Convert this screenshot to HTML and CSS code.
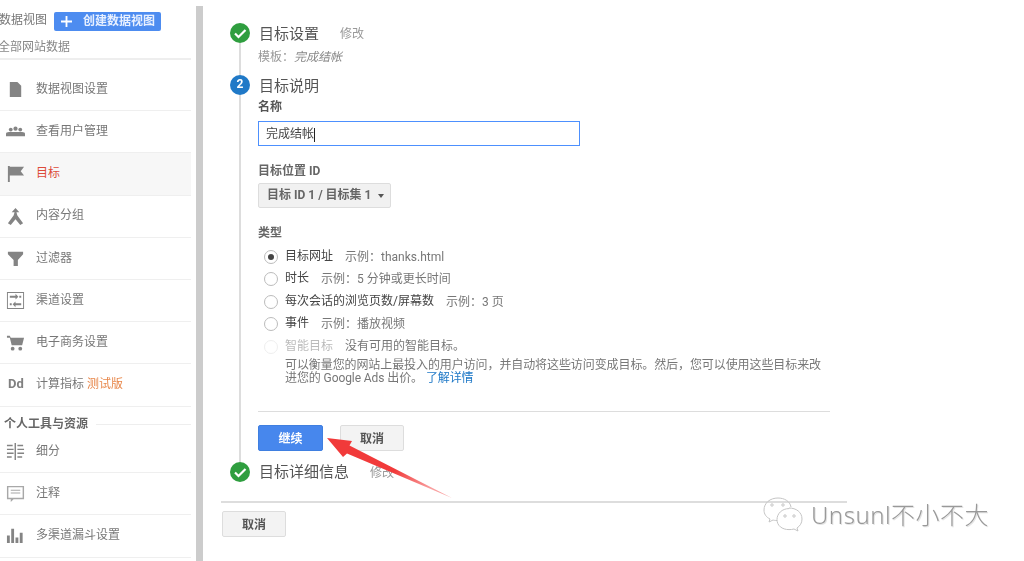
FILE: index.html
```html
<!DOCTYPE html>
<html lang="zh-CN">
<head>
<meta charset="utf-8">
<title>目标说明</title>
<link rel="stylesheet" href="styles.css">
</head>
<body>
<div class="app">
  <aside class="sidebar">
    <div class="view-head">
      <span class="view-title">数据视图</span>
      <button class="create-btn"><svg class="plus" viewBox="0 0 12 12"><path d="M5 0h2v5h5v2H7v5H5V7H0V5h5z"/></svg><span>创建数据视图</span></button>
    </div>
    <div class="view-sub">全部网站数据</div>
    <nav class="menu">
      <a class="row"><svg class="ico" viewBox="0 0 20 20"><path d="M4 2h8l4 4v12H4z"/></svg><span>数据视图设置</span></a>
      <a class="row"><svg class="ico" viewBox="0 0 20 20"><circle cx="5" cy="8" r="2"/><circle cx="10" cy="7" r="2.2"/><circle cx="15" cy="8" r="2"/><path d="M0 15v-2.500q0-2 3-2h14q3 0 3 2V15z"/></svg><span>查看用户管理</span></a>
      <a class="row active"><svg class="ico" viewBox="0 0 20 20"><path d="M2 2h2v17H2zM4 3h15l-3.500 4.500L19 12H4z"/></svg><span class="red">目标</span></a>
      <a class="row"><svg class="ico" viewBox="0 0 20 20"><path d="M10 1l4 4.500h-3L12 9l6 8-3 2-5-6-5 6-3-2 6-8 1-3.500H6z"/></svg><span>内容分组</span></a>
      <a class="row"><svg class="ico" viewBox="0 0 20 20"><path d="M2 3h16v2.500l-5.500 6V18h-4.500v-6.500l-6-6z"/></svg><span>过滤器</span></a>
      <a class="row"><svg class="ico" viewBox="0 0 20 20"><path d="M1 1h18v18H1zM2 2v16h16V2z"/><path d="M4 5h6V3l3 3-3 3V7H4zM16 13h-6v-2l-3 3 3 3v-2h6zM14 5h2v2h-2zM4 13h2v2H4z"/></svg><span>渠道设置</span></a>
      <a class="row"><svg class="ico" viewBox="0 0 20 20"><path d="M1 3h3l1 2h14l-2 8H6L4 5H1z"/><circle cx="7" cy="16.500" r="2"/><circle cx="15" cy="16.500" r="2"/></svg><span>电子商务设置</span></a>
      <a class="row"><span class="dd">Dd</span><span>计算指标 <em class="beta">测试版</em></span></a>
      <div class="section"><span>个人工具与资源</span><i></i></div>
      <a class="row"><svg class="ico" viewBox="0 0 20 20"><path d="M1 3h6v1.500H1zM1 7h7v1.500H1zM1 11h7v1.500H1zM1 15h5v1.500H1zM9 1h1.500v18H9zM12 3h6v1.500h-6zM12 7h7v1.500h-7zM12 11h7v1.500h-7zM12 15h5v1.500h-5z"/></svg><span>细分</span></a>
      <a class="row"><svg class="ico ico-light" viewBox="0 0 20 20"><path d="M1 2h18v14H8l-3 3v-3H1zM2.500 3.500v11h15v-11z"/><path d="M5 6h10v1H5zM5 9h10v1H5z"/></svg><span>注释</span></a>
      <a class="row"><svg class="ico" viewBox="0 0 20 20"><path d="M1 10h3v8H1zM5.500 3h3v15h-3zM10 12h3v6h-3zM14.500 7h3v11h-3z"/></svg><span>多渠道漏斗设置</span></a>
    </nav>
  </aside>
  <div class="scrollbar"></div>
  <main class="main">
    <section class="step step-one">
      <div class="rail"><span class="dot done"><svg viewBox="0 0 20 20"><path d="M5 10.500l3.500 3.500L15.500 7" /></svg></span><i class="line"></i></div>
      <div class="body">
        <div class="title"><h2>目标设置</h2><a class="edit">修改</a></div>
        <p class="template">模板<span class="colon">：</span><em>完成结帐</em></p>
      </div>
    </section>
    <section class="step step-two">
      <div class="rail"><span class="dot num">2</span><i class="line"></i></div>
      <div class="body">
        <div class="title"><h2>目标说明</h2></div>
        <label class="field name-label">名称</label>
        <div class="input"><span>完成结帐</span><i class="caret"></i></div>
        <label class="field gap-label">目标位置 ID</label>
        <div class="select"><span>目标 ID 1 / 目标集 1</span><i class="tri"></i></div>
        <label class="field gap-label">类型</label>
        <ul class="radios">
          <li><i class="radio on"></i><b>目标网址</b><span>示例<span class="colon">：</span>thanks.html</span></li>
          <li><i class="radio"></i><b>时长</b><span>示例<span class="colon">：</span>5 分钟或更长时间</span></li>
          <li><i class="radio"></i><b>每次会话的浏览页数/屏幕数</b><span>示例<span class="colon">：</span>3 页</span></li>
          <li><i class="radio"></i><b>事件</b><span>示例<span class="colon">：</span>播放视频</span></li>
          <li class="off"><i class="radio"></i><b>智能目标</b><span>没有可用的智能目标。</span></li>
        </ul>
        <p class="desc">可以衡量您的网站上最投入的用户访问，并自动将这些访问变成目标。然后，您可以使用这些目标来改<br>进您的 Google Ads 出价。 <a>了解详情</a></p>
        <hr class="rule">
        <div class="actions"><button class="btn primary">继续</button><button class="btn">取消</button></div>
      </div>
    </section>
    <section class="step step-three">
      <div class="rail"><span class="dot done"><svg viewBox="0 0 20 20"><path d="M5 10.500l3.500 3.500L15.500 7" /></svg></span></div>
      <div class="body">
        <div class="title"><h2>目标详细信息</h2><a class="edit">修改</a></div>
      </div>
    </section>
    <div class="footer"><button class="btn">取消</button></div>
  </main>
</div>
<svg class="arrow" viewBox="0 0 130 66"><defs><linearGradient id="fade" x1="0" x2="1" y1="0" y2="0.500"><stop offset="0.650" stop-color="#f13a3a"/><stop offset="1" stop-color="#f9a0a0"/></linearGradient></defs><path fill="url(#fade)" d="M2 3L27 6 24.500 10.500 127 63 22 18.500 18 22z"/></svg>
<div class="mark">
  <svg class="wechat" viewBox="0 0 40 36"><path d="M15 1C7 1 1 6 1 13c0 4 2 7 6 9l-1 3 4-2c1 .3 2 .5 4 .5" /><path d="M15 1c6 0 12 3 13 9" /><path d="M26 11c7 0 13 4 13 11 0 4-2 7-5 9l1 3-4-2c-2 .5-3 .6-5 .6-7 0-12-4-12-10s5-11 12-11z" /><circle cx="9" cy="8" r="1.200"/><circle cx="20" cy="8" r="1.200"/><circle cx="22" cy="19" r="1.200"/><circle cx="31" cy="19" r="1.200"/></svg>
  <span>Unsunl不小不大</span>
</div>
</body>
</html>
```
FILE: styles.css
```css
* { box-sizing: border-box; }
html, body { margin: 0; height: 561px; overflow: hidden; background: #fff; }
body {
  position: relative;
  font: 12px/1.3 Roboto, "Noto Sans CJK SC", sans-serif;
  color: #555;
}
.app { display: flex; height: 561px; filter: blur(0.45px); }
.colon { font-family: "Noto Sans CJK TC", sans-serif; }

/* sidebar */
.sidebar { width: 191px; flex: none; overflow: hidden; }
.view-head { display: flex; align-items: center; height: 20px; margin: 11px 0 0 -1px; gap: 7px; }
.view-title { font-size: 12px; color: #777; white-space: nowrap; }
.create-btn {
  display: flex; align-items: center; width: 107px; height: 19px; padding: 0 0 0 7px;
  border: 0; border-radius: 2px; background: #4d8cf0; color: #e8f0ff;
  font: 700 12px/19px Roboto, "Noto Sans CJK SC", sans-serif;
}
.plus { width: 11px; height: 11px; margin-right: 11px; fill: #fff; flex: none; }
.view-sub { height: 29px; margin-left: -2px; padding-top: 9px; font-size: 12px; color: #888; border-bottom: 2px solid #eee; }
.menu { padding-top: 9px; }
.row {
  display: flex; align-items: center; height: 42.2px; padding-left: 36px; position: relative;
  border-bottom: 1px solid #efefef; color: #777; font-size: 12px;
}
.row.active { background: #f7f7f7; }
.ico { position: absolute; left: 6px; top: 11px; width: 19px; height: 19px; fill: #848484; }
.ico-light { fill: #a8a8a8; }
.red { color: #dd4b39; }
.dd { position: absolute; left: 8px; font-weight: 700; font-size: 13px; color: #808080; }
.beta { font-style: normal; color: #e8874a; }
.section {
  display: flex; align-items: center; gap: 8px; height: 24.500px; padding: 12px 0 0 4px;
  color: #666; font-weight: 700; font-size: 12px; white-space: nowrap;
}
.section i { flex: 1; height: 1px; background: #eee; }

/* scrollbar */
.scrollbar { width: 7px; flex: none; margin: 6px 0 0 5px; background: #ccc; }

/* main */
.main { flex: 1; padding: 23px 0 0 18px; }
.step { display: flex; margin-left: 9px; gap: 8px; }
.step-one { height: 52px; }
.step-three { height: 39px; }
.rail { width: 20px; flex: none; display: flex; flex-direction: column; align-items: center; }
.line { flex: 1; width: 2px; background: #ddd; }
.dot { width: 20px; height: 20px; flex: none; border-radius: 50%; display: flex; align-items: center; justify-content: center; }
.dot svg { width: 20px; height: 20px; fill: none; stroke: #fff; stroke-width: 2.200; }
.done { background: #2f9e3f; }
.num { background: #2079c7; color: #fff; font-weight: 700; font-size: 12px; }
.body { flex: 1; }
.title { display: flex; align-items: center; height: 22px; padding-top: 2px; }
.step-three .title { padding-top: 0; }
.title h2 { margin: 0 0 0 1px; font-size: 15px; font-weight: 400; color: #555; }
.edit { margin-left: 21px; color: #999; font-size: 12px; }
.step-three .edit { padding-top: 2px; }
.template { margin: 3px 0 0; color: #999; font-size: 12px; }
.template em { color: #888; }
.field { display: block; height: 16px; line-height: 18px; font-weight: 700; color: #666; font-size: 12px; }
.name-label { margin-top: 1px; color: #555; }
.gap-label { margin-top: 16px; }
.input {
  display: flex; align-items: center; width: 322px; height: 25px; margin-top: 7px; padding: 2px 0 0 7px;
  border: 1px solid #4d90fe; color: #444; font-size: 12px;
}
.caret { width: 1px; height: 14px; background: #222; }
.select {
  display: flex; align-items: center; gap: 7px; width: 133px; height: 25px; margin-top: 5px; padding: 1px 0 0 8px;
  background: #f1f1f1; border: 1px solid #ddd; border-radius: 2px; font-weight: 700; color: #666; font-size: 12px; white-space: nowrap;
}
.tri { border: 3px solid transparent; border-top: 4px solid #555; border-bottom: 0; }
.radios { list-style: none; margin: 4px 0 0; padding: 0 0 0 6px; }
.radios li { display: flex; align-items: center; height: 22.500px; padding-top: 3px; white-space: nowrap; }
.radios b { margin-left: 7px; font-weight: 400; color: #444; font-size: 12px; }
.radios li > span { margin-left: 12px; color: #777; }
.radio { width: 14px; height: 14px; flex: none; border: 1px solid #bbb; border-radius: 50%; display: flex; align-items: center; justify-content: center; background: #fff; }
.radio.on::after { content: ""; width: 6px; height: 6px; border-radius: 50%; background: #444; }
.off .radio { border-color: #eee; }
.off b { color: #bbb; }
.desc { margin: 0; padding: 2px 0 0 27px; width: 572px; font-size: 12px; line-height: 13px; letter-spacing: -0.09px; color: #777; white-space: nowrap; }
.desc a { color: #2079c7; }
.rule { width: 572px; height: 1px; margin: 26px 0 0; border: 0; background: #ddd; }
.actions { display: flex; gap: 17px; margin-top: 13px; padding-bottom: 11px; }
.btn {
  width: 64px; height: 26px; padding: 1px 0 0; border: 1px solid #ddd; border-radius: 2px; background: #f3f3f3;
  color: #555; font: 700 12px/24px Roboto, "Noto Sans CJK SC", sans-serif;
}
.primary { width: 65px; background: #4787ed; border-color: #3f7fe0; color: #fff; }
.footer { width: 626px; border-top: 2px solid #ddd; padding: 8px 0 0 1px; }

/* overlays */
.arrow { position: absolute; left: 325px; top: 435px; width: 130px; height: 66px; }
.mark { position: absolute; left: 763px; top: 497px; display: flex; align-items: center; gap: 8px; }
.wechat { width: 40px; height: 36px; fill: none; stroke: #c4c4c4; stroke-width: 1; }
.mark span { font: 300 24px/30px "Noto Sans", "Noto Sans CJK SC", sans-serif; letter-spacing: 0.5px; color: #999; text-shadow: 1px 1px 0 #e4e4e4; }
```
